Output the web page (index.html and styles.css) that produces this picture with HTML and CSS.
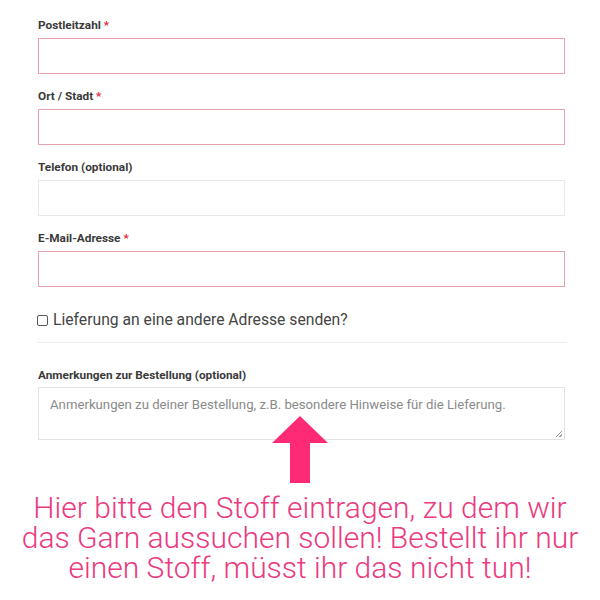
FILE: index.html
```html
<!DOCTYPE html>
<html>
<head>
	<meta charset="utf-8">
	<title>Kasse</title>
	<link rel="stylesheet" href="styles.css">
</head>
<body>

<div class="checkout">

	<div class="field">
		<label class="label">Postleitzahl <span class="req">*</span></label>
		<div class="inp invalid"></div>
	</div>

	<div class="field">
		<label class="label">Ort / Stadt <span class="req">*</span></label>
		<div class="inp invalid"></div>
	</div>

	<div class="field">
		<label class="label">Telefon (optional)</label>
		<div class="inp"></div>
	</div>

	<div class="field">
		<label class="label">E-Mail-Adresse <span class="req">*</span></label>
		<div class="inp invalid"></div>
	</div>

	<div class="ship">
		<span class="box"></span>
		<span>Lieferung an eine andere Adresse senden?</span>
	</div>

	<div class="notes">
		<label class="label">Anmerkungen zur Bestellung (optional)</label>
		<div class="area">
			Anmerkungen zu deiner Bestellung, z.B. besondere Hinweise für die Lieferung.
			<span class="grip"></span>
		</div>
		<svg class="arrow" width="56" height="68" viewBox="0 0 56 68">
			<polygon points="28,0 56,27 38,27 38,67 18,67 18,27 0,27" fill="#ff2a76"/>
		</svg>
	</div>

	<p class="hint">Hier bitte den Stoff eintragen, zu dem wir das Garn aussuchen sollen! Bestellt ihr nur einen Stoff, müsst ihr das nicht tun!</p>

</div>

</body>
</html>
```

FILE: styles.css
```css
html,
body {
	margin: 0;
	background: #fff;
	font-family: Roboto, "Liberation Sans", sans-serif;
}

.checkout {
	width: 527px;
	padding: 17px 0 0 38px;
	display: flex;
	flex-direction: column;
}

.field {
	display: flex;
	flex-direction: column;
	gap: 5px;
	margin-bottom: 14px;
}

.label {
	font-size: 11.8px;
	line-height: 16px;
	font-weight: 700;
	color: #3a3a3a;
}

.req {
	color: #e0263a;
}

.inp {
	height: 34px;
	border: 1px solid #e8e8e8;
	background: #fff;
}

.inp.invalid {
	border-color: #e7a4ad;
}

.ship {
	display: flex;
	align-items: center;
	gap: 5px;
	margin: 9px 0 0 -1px;
	padding-bottom: 12px;
	border-bottom: 1px solid #eeeeee;
	width: 530px;
	font-size: 15.7px;
	line-height: 20px;
	color: #444;
}

.box {
	width: 9px;
	height: 9px;
	border: 1px solid #555;
	border-radius: 2px;
}

.notes {
	position: relative;
	display: flex;
	flex-direction: column;
	gap: 4px;
	margin-top: 24px;
}

.area {
	position: relative;
	height: 37px;
	padding: 7px 11px;
	border: 1px solid #e3e3e3;
	font-size: 13.2px;
	line-height: 20px;
	color: #8a8a8a;
}

.grip {
	position: absolute;
	right: 2px;
	bottom: 2px;
	width: 6px;
	height: 6px;
	background: linear-gradient(135deg, transparent 45%, #999 45%, #999 55%, transparent 55%, transparent 75%, #999 75%, #999 85%, transparent 85%);
}

.arrow {
	position: absolute;
	left: 234px;
	top: 49px;
}

.hint {
	margin: 53px 0 0 -38px;
	width: 570px;
	padding: 0 15px;
	text-align: center;
	font-size: 30px;
	line-height: 30px;
	font-weight: 300;
	color: #ea3a80;
}
```
